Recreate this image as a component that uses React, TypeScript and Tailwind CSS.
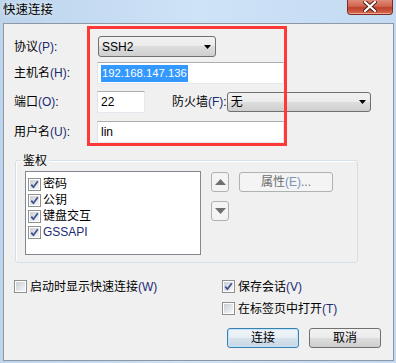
import React from "react";

const BTN =
  "bg-[linear-gradient(#f2f2f2,#ebebeb_50%,#dddddd_50%,#cfcfcf)] border border-[#707070] rounded-[3px]";

function Acc({ k }: { k: string }) {
  return <span className="text-[#1d2b74]">({k})</span>;
}

function Check({ checked }: { checked?: boolean }) {
  return (
    <span className="flex w-[13px] h-[13px] shrink-0 border border-[#8e8f8f] bg-white p-[1px]">
      <span className="flex flex-1 items-center justify-center bg-linear-to-br from-[#c9ced6] to-[#f7f7f7]">
        {checked && (
          <svg width="9" height="9" viewBox="0 0 9 9">
            <path d="M1.3 4.6 L3.4 7.2 L7.8 1.2" stroke="#3c4f8c" strokeWidth="1.7" fill="none" />
          </svg>
        )}
      </span>
    </span>
  );
}

function Combo({ value, width, height }: { value: string; width: string; height: string }) {
  return (
    <div className={`${BTN} ${width} ${height} shrink-0 flex items-center justify-between pl-[3px] pr-[4px]`}>
      <span className="text-black">{value}</span>
      <svg width="7" height="4" viewBox="0 0 7 4">
        <path d="M0 0 H7 L3.5 4 Z" fill="#000" />
      </svg>
    </div>
  );
}

function TextBox({ width, children }: { width: string; children?: React.ReactNode }) {
  return (
    <div
      className={`${width} h-[22px] shrink-0 flex items-center pl-[3px] bg-white border border-[#e3e9ef] border-t-[#abadb3] border-l-[#e2e3ea]`}
    >
      {children}
    </div>
  );
}

export default function App() {
  return (
    <div className="relative w-[396px] h-[363px] flex flex-col bg-linear-to-r from-[#bcd4ec] via-[#cfe3f7] to-[#c3daf2] pl-[3px] pr-[2px] pb-[2px] text-[12px] leading-[14px] text-black font-[family-name:Liberation_Sans,Noto_Sans_CJK_SC,sans-serif]">
      {/* title bar */}
      <div className="h-[23px] flex items-start justify-between shrink-0">
        <span className="mt-[3px] text-[12.5px] leading-[14px] text-black [text-shadow:0_0_6px_#ffffff]">
          快速连接
        </span>
        <div className="w-[46px] h-[15px] mr-px flex items-start justify-center rounded-b-[4px] border border-t-0 border-[#7e2b22] bg-[linear-gradient(#e08b79,#cf6450_45%,#c0402b_55%,#d66a4f)] shadow-[inset_0_-1px_0_#f0a898]">
          <svg width="14" height="11" viewBox="0 0 14 11" className="mt-px">
            <path d="M2 1 L12 10 M12 1 L2 10" stroke="#4a1a15" strokeWidth="4" strokeLinecap="square" />
            <path d="M2 1 L12 10 M12 1 L2 10" stroke="#ffffff" strokeWidth="2.2" strokeLinecap="square" />
          </svg>
        </div>
      </div>

      {/* client area */}
      <div className="flex-1 flex flex-col border border-[#8c98a6] bg-[#f0f0f0] pl-[10px]">
        <div className="mt-[12px] h-[21px] flex items-center">
          <span className="w-[84px]">
            协议<Acc k="P" />:
          </span>
          <Combo value="SSH2" width="w-[118px]" height="h-[21px]" />
        </div>

        <div className="mt-[5px] h-[22px] flex items-center">
          <span className="w-[83px]">
            主机名<Acc k="H" />:
          </span>
          <TextBox width="w-[187px]">
            <span className="bg-[#3399ff] text-white text-[11.3px] leading-[17px] px-px">192.168.147.136</span>
          </TextBox>
        </div>

        <div className="mt-[7px] h-[21px] flex items-center">
          <span className="w-[83px]">
            端口<Acc k="O" />:
          </span>
          <TextBox width="w-[48px]">22</TextBox>
          <span className="ml-[27px] whitespace-nowrap">
            防火墙<Acc k="F" />:
          </span>
          <Combo value="无" width="w-[144px]" height="h-[20px]" />
        </div>

        <div className="mt-[9px] h-[22px] flex items-center">
          <span className="w-[83px]">
            用户名<Acc k="U" />:
          </span>
          <TextBox width="w-[187px]">lin</TextBox>
        </div>

        {/* auth group */}
        <div className="relative mt-[17px] ml-px w-[343px] h-[103px] flex items-start border border-[#d5dfe5] rounded-[3px] shadow-[inset_1px_1px_0_#ffffff] pl-[9px] pt-[10px]">
          <span className="absolute -top-[7px] left-[5px] bg-[#f0f0f0] px-[2px]">鉴权</span>
          <div className="w-[176px] h-[84px] border border-[#828790] bg-white pl-[2px] pt-[4px]">
            {[
              { t: "密码" },
              { t: "公钥" },
              { t: "键盘交互" },
              { t: "GSSAPI", latin: true },
            ].map((it) => (
              <div key={it.t} className="h-[16px] flex items-center gap-[2px]">
                <Check checked />
                <span className={it.latin ? "text-[#1d2b74]" : ""}>{it.t}</span>
              </div>
            ))}
          </div>
          <div className="ml-[10px] mt-px flex flex-col gap-[9px]">
            <div className="w-[18px] h-[20px] flex items-center justify-center border border-[#adb2b5] rounded-[3px] bg-[#f4f4f4]">
              <svg width="11" height="6" viewBox="0 0 11 6">
                <path d="M0 6 L5.5 0 L11 6 Z" fill="#6f6f6f" />
              </svg>
            </div>
            <div className="w-[18px] h-[20px] flex items-center justify-center border border-[#adb2b5] rounded-[3px] bg-[#f4f4f4]">
              <svg width="11" height="6" viewBox="0 0 11 6">
                <path d="M0 0 L11 0 L5.5 6 Z" fill="#6f6f6f" />
              </svg>
            </div>
          </div>
          <div className="ml-[10px] mt-px w-[94px] h-[20px] flex items-center justify-center border border-[#adb2b5] rounded-[3px] bg-[#f4f4f4] text-[#6d6d6d]">
            属性<span className="text-[#7d93b8]">(E)</span>...
          </div>
        </div>

        {/* bottom options */}
        <div className="mt-[17px] h-[13px] flex items-center">
          <div className="w-[208px] flex items-center gap-[3px]">
            <Check />
            <span>
              启动时显示快速连接<Acc k="W" />
            </span>
          </div>
          <div className="flex items-center gap-[3px]">
            <Check checked />
            <span>
              保存会话<Acc k="V" />
            </span>
          </div>
        </div>
        <div className="mt-[9px] h-[13px] flex items-center pl-[208px] gap-[3px]">
          <Check />
          <span>
            在标签页中打开<Acc k="T" />
          </span>
        </div>

        <div className="mt-[13px] ml-[213px] flex gap-[10px]">
          <div className="w-[72px] h-[20px] flex items-center justify-center rounded-[3px] border border-[#3c7fb1] bg-[linear-gradient(#f0f5f9,#e6eef5_50%,#d6e2ec_50%,#c9d8e5)] shadow-[inset_0_0_0_1px_#bfe4fb]">
            连接
          </div>
          <div className={`${BTN} w-[72px] h-[20px] flex items-center justify-center`}>取消</div>
        </div>
      </div>

      {/* red annotation frame */}
      <div className="absolute left-[87px] top-[26px] w-[200px] h-[120px] border-[3px] border-[#ff3838] pointer-events-none" />
    </div>
  );
}
